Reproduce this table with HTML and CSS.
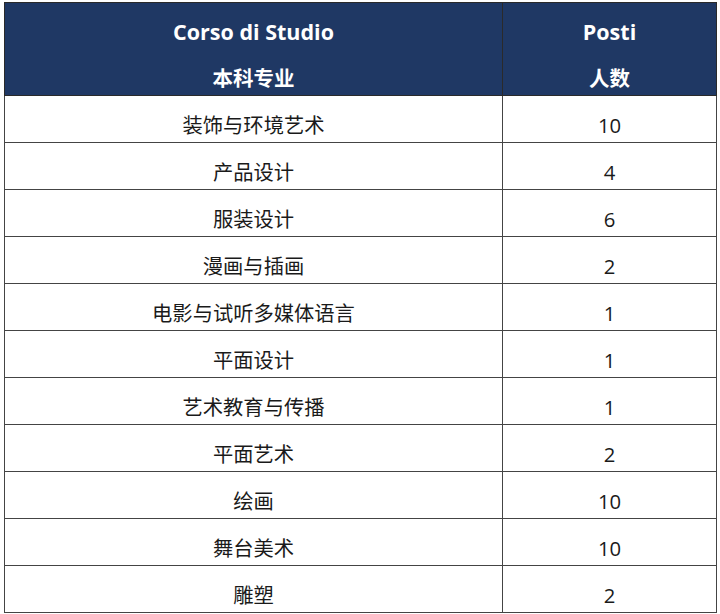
FILE: index.html
```html
<!DOCTYPE html>
<html lang="zh">
<head>
<meta charset="utf-8">
<link rel="stylesheet" href="styles.css">
</head>
<body>
<div class="wrap">
<table class="tbl">
  <thead>
    <tr>
      <th class="c1"><div class="l1">Corso di Studio</div><div class="l2">本科专业</div></th>
      <th class="c2"><div class="l1">Posti</div><div class="l2">人数</div></th>
    </tr>
  </thead>
  <tbody>
    <tr><td>装饰与环境艺术</td><td>10</td></tr>
    <tr><td>产品设计</td><td>4</td></tr>
    <tr><td>服装设计</td><td>6</td></tr>
    <tr><td>漫画与插画</td><td>2</td></tr>
    <tr><td>电影与试听多媒体语言</td><td>1</td></tr>
    <tr><td>平面设计</td><td>1</td></tr>
    <tr><td>艺术教育与传播</td><td>1</td></tr>
    <tr><td>平面艺术</td><td>2</td></tr>
    <tr><td>绘画</td><td>10</td></tr>
    <tr><td>舞台美术</td><td>10</td></tr>
    <tr><td>雕塑</td><td>2</td></tr>
  </tbody>
</table>
</div>
</body>
</html>
```
FILE: styles.css
```css
html, body {
  margin: 0;
  padding: 0;
  background: #ffffff;
}
body {
  font-family: "Open Sans", "Noto Sans CJK SC", sans-serif;
  color: #1a1a1a;
}
.wrap {
  padding: 2px 0 0 4px;
}
.tbl {
  border-collapse: collapse;
  width: 713px;
  table-layout: fixed;
  border-bottom: 1px solid #3a3a3a;
  box-shadow: 0 2px 0 #c8c8c8;
}
.tbl th {
  background: #1f3864;
  color: #ffffff;
  font-weight: 700;
  font-size: 20.5px;
  height: 92px;
  padding: 6px 0 0 0;
  box-sizing: border-box;
  vertical-align: top;
  border: 1px solid #2a2a2a;
  text-align: center;
}
.tbl th.c1 { width: 498px; }
.tbl th .l1 {
  height: 46px;
  line-height: 46px;
  font-size: 21.5px;
}
.tbl th .l2 {
  height: 40px;
  line-height: 46px;
}
.tbl td {
  height: 47px;
  box-sizing: border-box;
  padding: 13px 0 0 0;
  line-height: 33px;
  vertical-align: top;
  font-size: 20.3px;
  text-align: center;
  border: 1px solid #444444;
  white-space: nowrap;
}
```
